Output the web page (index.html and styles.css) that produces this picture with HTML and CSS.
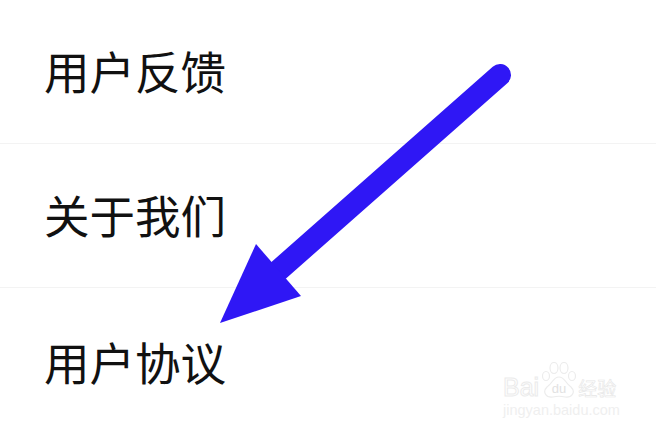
FILE: index.html
```html
<!DOCTYPE html>
<html>
<head>
  <title>用户协议</title>
  <link rel="stylesheet" href="styles.css">
</head>
<body>
  <div class="list">
    <div class="row">用户反馈</div>
    <div class="row">关于我们</div>
    <div class="row">用户协议</div>
  </div>

  <svg class="arrow" width="656" height="432" viewBox="0 0 656 432">
    <path d="M500 75 L279 270" stroke="#2f17f5" stroke-width="22" stroke-linecap="round" fill="none"/>
    <path d="M256 244 L301 296 L220 323 Z" fill="#2f17f5"/>
  </svg>

  <div class="watermark">
    <div class="wm-top">
      <span class="wm-bai">Bai</span>
      <svg class="wm-paw" width="36" height="36" viewBox="0 0 36 36">
        <g fill="#fff" stroke="#ececec" stroke-width="1.2">
          <ellipse cx="5" cy="14" rx="3.500" ry="4.500"/>
          <ellipse cx="13" cy="6" rx="4" ry="5.500"/>
          <ellipse cx="23" cy="6" rx="4" ry="5.500"/>
          <ellipse cx="31" cy="14" rx="3.500" ry="4.500"/>
          <path d="M18 15 C12 15 12 21 6 25 C1 30 5 36 12 35 C16 34 20 34 24 35 C31 36 35 30 30 25 C24 21 24 15 18 15 Z"/>
        </g>
        <text x="18" y="31" text-anchor="middle" class="wm-du">du</text>
      </svg>
      <span class="wm-jy">经验</span>
    </div>
    <div class="wm-url">jingyan.baidu.com</div>
  </div>
</body>
</html>
```

FILE: styles.css
```css
body {
  margin: 0;
  width: 656px;
  height: 432px;
  overflow: hidden;
  background-color: #FFF;
  font-family: "Liberation Sans", "Noto Sans CJK SC", sans-serif;
}

.list {
  display: flex;
  flex-direction: column;
}

.row {
  box-sizing: border-box;
  height: 144px;
  padding-left: 44px;
  padding-bottom: 3px;
  display: flex;
  align-items: center;
  font-family: "Noto Sans CJK SC", sans-serif;
  font-size: 45.500px;
  color: #111;
  border-bottom: 1px solid #F3F3F3;
}

.row:last-child {
  padding-top: 2px;
  padding-bottom: 0;
  border-bottom: none;
}

.arrow {
  position: absolute;
  top: 0;
  left: 0;
}

.watermark {
  position: absolute;
  left: 503px;
  top: 362px;
  width: 120px;
}

.wm-top {
  display: flex;
  align-items: flex-end;
  height: 36px;
}

.wm-bai {
  font-size: 25px;
  line-height: 22px;
  color: #FFF;
  -webkit-text-stroke: 1px #EBEBEB;
}

.wm-paw {
  flex-shrink: 0;
  margin-left: 2px;
}

.wm-du {
  font-size: 13px;
  font-family: "Liberation Sans", sans-serif;
  fill: #E2E2E2;
}

.wm-jy {
  margin-left: 1px;
  font-family: "Noto Sans CJK SC", sans-serif;
  font-size: 19px;
  line-height: 20px;
  white-space: nowrap;
  color: #FFF;
  -webkit-text-stroke: 0.6px #E6E6E6;
}

.wm-url {
  margin-top: 4px;
  font-size: 14.500px;
  line-height: 16px;
  white-space: nowrap;
  color: #EFEFEF;
}
```
